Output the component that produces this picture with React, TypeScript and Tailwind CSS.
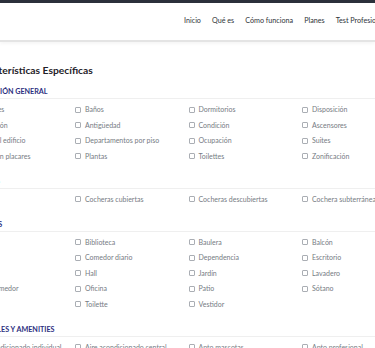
import React from 'react';

type Section = {
  title: string;
  items: string[];
};

const sections: Section[] = [
  {
    title: 'Información general',
    items: [
      'Ambientes', 'Baños', 'Dormitorios', 'Disposición',
      'Orientación', 'Antigüedad', 'Condición', 'Ascensores',
      'Altura del edificio', 'Departamentos por piso', 'Ocupación', 'Suites',
      'Dorm. con placares', 'Plantas', 'Toilettes', 'Zonificación',
    ],
  },
  {
    title: 'Cocheras',
    items: ['Cochera', 'Cocheras cubiertas', 'Cocheras descubiertas', 'Cochera subterránea'],
  },
  {
    title: 'Ambientes',
    items: [
      'Altillo', 'Biblioteca', 'Baulera', 'Balcón',
      'Cocina', 'Comedor diario', 'Dependencia', 'Escritorio',
      'Estar', 'Hall', 'Jardín', 'Lavadero',
      'Living comedor', 'Oficina', 'Patio', 'Sótano',
      'Quincho', 'Toilette', 'Vestidor',
    ],
  },
  {
    title: 'Adicionales y amenities',
    items: ['Aire acondicionado individual', 'Aire acondicionado central', 'Apto mascotas', 'Apto profesional'],
  },
];

const navLinks = ['Inicio', 'Qué es', 'Cómo funciona', 'Planes', 'Test Profesional'];

function Check({ label }: { label: string }) {
  return (
    <label className="flex h-[15.5px] items-center gap-[4px] whitespace-nowrap text-[7px] text-[#767b83]">
      <span className="h-[6px] w-[6px] shrink-0 rounded-[1px] border border-[#aaaeb4] bg-white" />
      {label}
    </label>
  );
}

export default function App() {
  return (
    <div className="h-[348px] w-[375px] overflow-hidden bg-white font-['Lato','Liberation_Sans',sans-serif]">
      {/* barra superior */}
      <div className="h-[3px] bg-[#2b303b]" />
      <nav className="flex h-[39px] items-center gap-[11px] whitespace-nowrap border-b-2 border-[#e4e4e4] pl-[184px] text-[7.2px] text-[#2f3338] shadow-[0_2px_3px_rgba(0,0,0,0.04)]">
        {navLinks.map((l) => (
          <span key={l}>{l}</span>
        ))}
      </nav>

      {/* contenido */}
      <div className="ml-[-38.5px] w-[480px]">
        <h1 className="ml-[11px] mt-[21.5px] text-[10.3px] font-bold leading-[13px] text-[#1f2329]">
          Características Específicas
        </h1>

        {sections.map((s, i) => (
          <section key={s.title} className={i === 0 ? 'mt-[10.5px]' : 'mt-[12.75px]'}>
            <h2 className="border-b border-[#efefef] pb-[1px] text-[7.2px] font-bold uppercase leading-[10px] text-[#2d2f7f]">
              {s.title}
            </h2>
            <div className="grid grid-cols-[repeat(4,113.5px)] pt-[2.75px]">
              {s.items.map((it) => (
                <Check key={it} label={it} />
              ))}
            </div>
          </section>
        ))}
      </div>
    </div>
  );
}
